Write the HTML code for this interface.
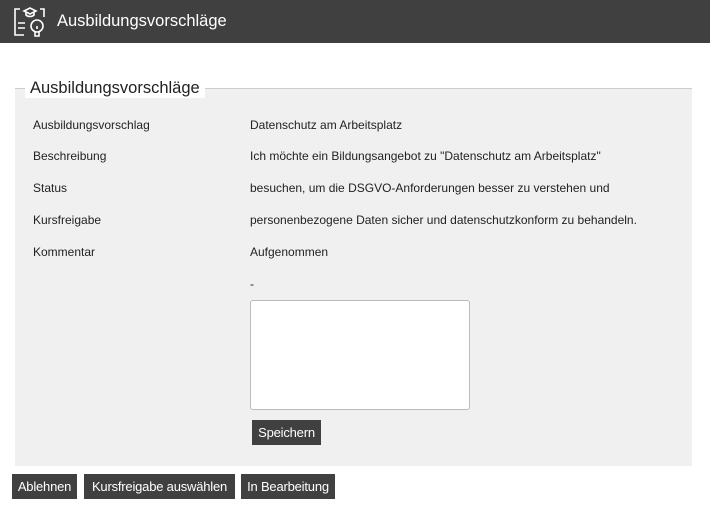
<!DOCTYPE html>
<html><head><style>
body{margin:0;width:710px;height:505px;background:#fff;font-family:"Liberation Sans",sans-serif;position:relative;overflow:hidden}
.hdr{position:absolute;left:0;top:0;width:710px;height:43px;background:#404040;color:#fff}
.hdr span{position:absolute;left:57px;top:12px;font-size:16.5px}
.fs{position:absolute;left:15px;top:88px;width:677px;height:377px;background:#f0f0f0;border-top:1px solid #ccc}
.lg{position:absolute;left:25px;top:78px;background:#fff;padding:0 5px;font-size:16.5px;color:#222;line-height:20px}
.t{position:absolute;font-size:12px;color:#222;line-height:14px}
.btn{position:absolute;background:#404040;color:#fff;font-size:13px;height:25px;line-height:25px;text-align:center;letter-spacing:-0.2px}
.ta{position:absolute;left:250px;top:300px;width:218px;height:108px;background:#fff;border:1px solid #bbb;border-radius:3px}
</style></head><body>
<div class="hdr">
<svg width="36" height="36" viewBox="0 0 36 36" style="position:absolute;left:12px;top:3px" fill="none" stroke="#fff" stroke-width="1.6">
<path d="M8 6H3v26h9M28 6h4v8"/><path d="M6 20h7M6 25h7"/>
<path d="M12 8l6-3 6 3-6 3z"/><path d="M14 9v3c2 2 6 2 8 0V9"/>
<circle cx="25" cy="23" r="6"/><path d="M23 29v4h4v-4M25 23v3"/>
</svg>
<span>Ausbildungsvorschläge</span></div>
<div class="fs"></div>
<div class="lg">Ausbildungsvorschläge</div>
<div class="t" style="left:33px;top:118px">Ausbildungsvorschlag</div>
<div class="t" style="left:33px;top:149px">Beschreibung</div>
<div class="t" style="left:33px;top:181px">Status</div>
<div class="t" style="left:33px;top:213px">Kursfreigabe</div>
<div class="t" style="left:33px;top:245px">Kommentar</div>
<div class="t" style="left:250px;top:118px">Datenschutz am Arbeitsplatz</div>
<div class="t" style="left:250px;top:149px">Ich möchte ein Bildungsangebot zu "Datenschutz am Arbeitsplatz"</div>
<div class="t" style="left:250px;top:181px">besuchen, um die DSGVO-Anforderungen besser zu verstehen und</div>
<div class="t" style="left:250px;top:213px">personenbezogene Daten sicher und datenschutzkonform zu behandeln.</div>
<div class="t" style="left:250px;top:245px">Aufgenommen</div>
<div class="t" style="left:250px;top:277px">-</div>
<div class="ta"></div>
<div class="btn" style="left:252px;top:420px;width:69px">Speichern</div>
<div class="btn" style="left:12px;top:474px;width:65px">Ablehnen</div>
<div class="btn" style="left:84px;top:474px;width:151px">Kursfreigabe auswählen</div>
<div class="btn" style="left:241px;top:474px;width:94px">In Bearbeitung</div>
</body></html>
